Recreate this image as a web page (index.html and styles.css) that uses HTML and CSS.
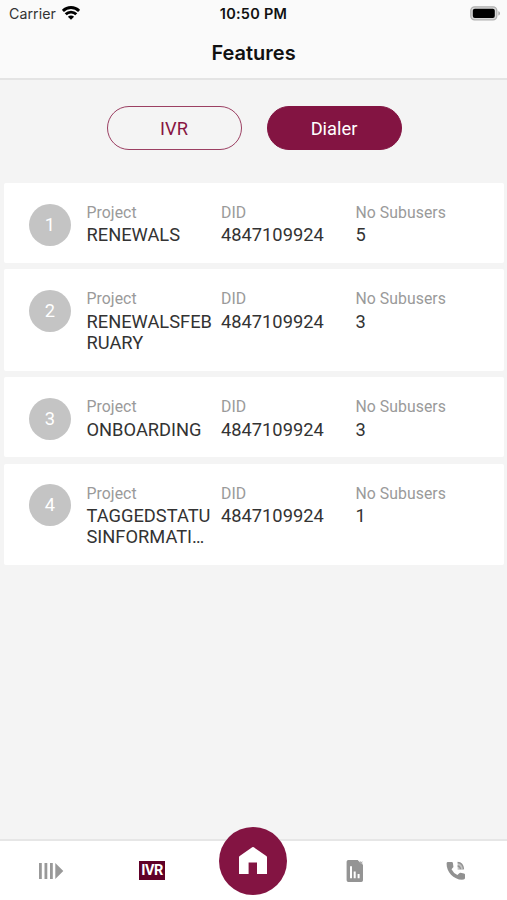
FILE: index.html
```html
<!DOCTYPE html>
<html lang="en">
<head>
<meta charset="utf-8">
<title>Features</title>
<link rel="stylesheet" href="styles.css">
</head>
<body>
<div class="app">
  <header class="header">
    <div class="status">
      <div class="carrier"><span>Carrier</span>
        <svg class="wifi" width="18" height="14" viewBox="0 0 18 14"><g fill="none" stroke="#000" stroke-width="2.9"><path d="M.9 4.9C5.4.4 12.6.4 17.1 4.9"/><path d="M3.7 8.3c2.900-2.900 7.700-2.900 10.600 0"/></g><path d="M9 13.700 5.900 10.800c1.800-1.600 4.400-1.600 6.200 0z"/></svg>
      </div>
      <time class="clock">10:50 PM</time>
      <svg class="battery" width="31" height="16" viewBox="0 0 31 16"><rect x=".8" y=".8" width="26" height="13" rx="3.8" fill="#d8d8d8" stroke="#b0b0b0" stroke-width="1.3"/><rect x="2.8" y="2.7" width="22" height="9.3" rx="2"/><path d="M28.3 5.2c2.3.7 2.3 3.6 0 4.3z" fill="#aaa"/></svg>
    </div>
    <h1 class="title">Features</h1>
  </header>
  <main class="content">
    <div class="switch">
      <button class="pill">IVR</button>
      <button class="pill active">Dialer</button>
    </div>
    <section class="list">
      <article class="card">
        <div class="num">1</div>
        <div class="col"><div class="label">Project</div><div class="value">RENEWALS</div></div>
        <div class="col"><div class="label">DID</div><div class="value">4847109924</div></div>
        <div class="col"><div class="label">No Subusers</div><div class="value">5</div></div>
      </article>
      <article class="card">
        <div class="num">2</div>
        <div class="col"><div class="label">Project</div><div class="value">RENEWALSFEB<br>RUARY</div></div>
        <div class="col"><div class="label">DID</div><div class="value">4847109924</div></div>
        <div class="col"><div class="label">No Subusers</div><div class="value">3</div></div>
      </article>
      <article class="card">
        <div class="num">3</div>
        <div class="col"><div class="label">Project</div><div class="value">ONBOARDING</div></div>
        <div class="col"><div class="label">DID</div><div class="value">4847109924</div></div>
        <div class="col"><div class="label">No Subusers</div><div class="value">3</div></div>
      </article>
      <article class="card">
        <div class="num">4</div>
        <div class="col"><div class="label">Project</div><div class="value">TAGGEDSTATU<br>SINFORMATI…</div></div>
        <div class="col"><div class="label">DID</div><div class="value">4847109924</div></div>
        <div class="col"><div class="label">No Subusers</div><div class="value">1</div></div>
      </article>
    </section>
  </main>
  <nav class="tabs">
    <a class="tab"><svg width="26" height="18" viewBox="0 0 26 18" fill="#999"><path d="M1 1h2.8v16H1zM6.500 1h2.800v16H6.500zM12 1h2.800v16H12zM17.300 1l8 8-8 8z"/></svg></a>
    <a class="tab"><span class="ivr">IVR</span></a>
    <a class="tab"><span class="home"><svg width="30" height="30" viewBox="0 0 30 30"><path d="M1 11.200Q1 10.400 1.700 9.900L14.200 1.300Q15 .8 15.800 1.300L28.300 9.900Q29 10.400 29 11.200V28H19V16.600H10.600V28H1z" fill="#fff"/></svg></span></a>
    <a class="tab"><svg width="18" height="24" viewBox="0 0 18 24"><path d="M2.300 1h9.400l2.300 2.600 3 2.100v15.600q0 1.700-1.700 1.700H2.300Q.6 23 .6 21.300V2.700Q.6 1 2.300 1z" fill="#949494"/><path d="m13.500 1.600 1.600 1.300 1.700-.7-.8 1.700.9 1.400-2.600-.8z" fill="#aaa"/><path d="M4 7.200h2v12H4zM7.700 12.500h2v6.700h-2zM11.600 15h2v4.200h-2z" fill="#fff"/></svg></a>
    <a class="tab"><svg width="20" height="20" viewBox="0 0 20 20"><path d="M2 1h3.800q1 0 1.100 1l.5 3.400q.1.700-.4 1.200L5.500 8.200q1.900 3.900 5.900 5.800l1.900-1.800q.5-.5 1.200-.4l3.500.6q1 .2 1 1.200v3.500q0 1.400-1.400 1.500C8.300 19.500.3 11 .6 2.400Q.6 1 2 1z" fill="#919191"/><path d="M11.600 1.500c3.600-.4 5.800 2.200 6 7.200h-6z" fill="#c2c2c2"/><path d="M11.600 1.500q5.300.3 5.900 6.700M11.600 5q2.400.1 3 3.200" fill="none" stroke="#929292" stroke-width="1.300"/></svg></a>
  </nav>
</div>
</body>
</html>
```
FILE: styles.css
```css
* { box-sizing: border-box; }
body { margin: 0; background: #f4f4f4; font-family: Roboto, sans-serif; }
.app { width: 507px; height: 900px; display: flex; flex-direction: column; overflow: hidden; }
.header { height: 80px; background: #fafafa; border-bottom: 2px solid #e4e4e4; font-family: Inter, sans-serif; color: #111; }
.status { height: 27px; display: grid; grid-template-columns: 1fr auto 1fr; align-items: center; padding: 0 6px 0 9px; }
.carrier { display: flex; align-items: center; gap: 6px; font-size: 14.2px; letter-spacing: .05px; color: #333; }
.wifi { display: block; margin-top: -2px; }
.clock { font-size: 14.5px; font-weight: 600; letter-spacing: .25px; margin-left: -3px; }
.battery { justify-self: end; display: block; }
.title { margin: 10px 0 0; font-size: 20px; line-height: 32px; font-weight: 600; text-align: center; }
.content { flex: 1; }
.switch { display: flex; justify-content: center; gap: 25px; padding: 26px 0 33px 1px; }
.pill { width: 135px; height: 44px; border: 1.4px solid #9b3f62; border-radius: 22px; background: transparent; color: #881543; font: 18.3px Roboto, sans-serif; padding: 0; }
.pill.active { background: #831442; border-color: #831442; color: #fff; }
.list { display: flex; flex-direction: column; gap: 6.4px; padding: 0 3px 0 4px; }
.card { min-height: 80px; background: #fff; border-radius: 2px; display: grid; grid-template-columns: 57.5px 134.5px 134.5px 1fr; padding: 19px 0 17.2px 25px; align-items: start; }
.num { width: 42px; height: 42px; margin-top: 1.6px; border-radius: 50%; background: #c4c4c4; color: #fff; font-size: 18.3px; line-height: 42px; text-align: center; }
.label { font-size: 15.8px; line-height: 21px; letter-spacing: .05px; color: #9a9a9a; }
.value { margin-top: 1.4px; font-size: 18.3px; line-height: 21.4px; color: #333; white-space: nowrap; }
.tabs { height: 61px; border-top: 2px solid #e6e6e6; background: #fff; display: grid; grid-template-columns: repeat(5, 1fr); }
.tab { display: flex; align-items: center; justify-content: center; }
.tab svg { display: block; }
.ivr { width: 26px; height: 19px; background: #600028; color: #fff; font: 700 14.5px/20px Roboto, sans-serif; letter-spacing: -.4px; text-align: center; }
.home { flex: none; width: 68px; height: 68px; margin-top: -20px; border-radius: 50%; background: #831442; display: flex; align-items: center; justify-content: center; }
```
